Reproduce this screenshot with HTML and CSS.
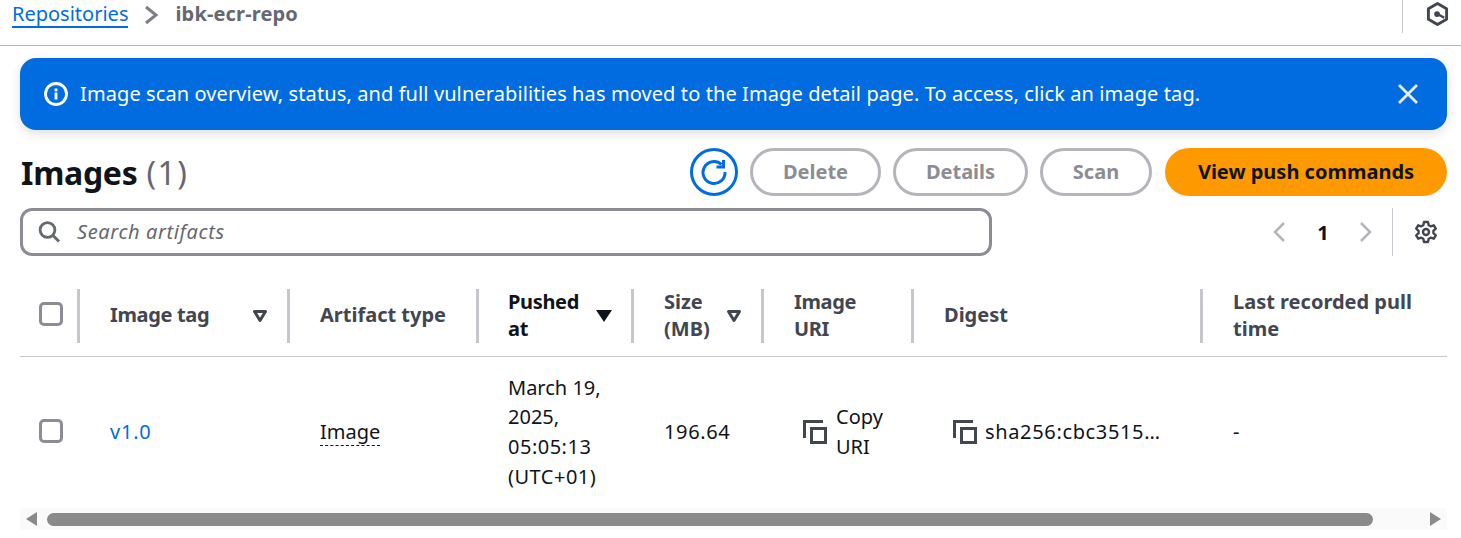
FILE: index.html
```html
<!DOCTYPE html>
<html lang="en">

<head>
    <meta charset="UTF-8">
    <title>ibk-ecr-repo</title>
    <link rel="stylesheet" href="styles.css">
</head>

<body>

    <div class="topbar">
        <div class="crumbs">
            <a class="crumb-link" href="#">Repositories</a>
            <svg class="crumb-sep" width="16" height="20" viewBox="0 0 16 20"><path d="M2 2l10 8-10 8" fill="none" stroke="#7d7d85" stroke-width="3"/></svg>
            <span class="crumb-current">ibk-ecr-repo</span>
        </div>
        <div class="top-right">
            <svg width="24" height="26" viewBox="0 0 24 26">
                <path d="M12 2l9.500 5.500v11L12 24l-9.500-5.500v-11z" fill="none" stroke="#424650" stroke-width="3" stroke-linejoin="round"/>
                <circle cx="11.500" cy="13" r="3" fill="#424650"/>
                <path d="M12 13l7 4" stroke="#424650" stroke-width="2.500"/>
            </svg>
        </div>
    </div>

    <div class="notice">
        <svg class="notice-icon" width="24" height="24" viewBox="0 0 24 24">
            <circle cx="12" cy="12" r="10.500" fill="none" stroke="#fff" stroke-width="2.800"/>
            <rect x="10.600" y="10.500" width="2.800" height="7" fill="#fff"/>
            <rect x="10.600" y="6.500" width="2.800" height="2.800" fill="#fff"/>
        </svg>
        <span class="notice-text">Image scan overview, status, and full vulnerabilities has moved to the Image detail page. To access, click an image tag.</span>
        <svg class="notice-close" width="20" height="20" viewBox="0 0 20 20"><path d="M1 1l18 18M19 1L1 19" stroke="#e9ebed" stroke-width="2.800"/></svg>
    </div>

    <div class="head-row">
        <h1>Images <span class="count">(1)</span></h1>
        <div class="actions">
            <button class="btn-icon" type="button">
                <svg width="28" height="28" viewBox="0 0 28 28">
                    <path d="M21.500 6.500A11 11 0 1 0 25 14" fill="none" stroke="#006ce0" stroke-width="3"/>
                    <path d="M23.500 2v7h-7" fill="none" stroke="#006ce0" stroke-width="3"/>
                </svg>
            </button>
            <button class="btn btn-delete" type="button">Delete</button>
            <button class="btn btn-details" type="button">Details</button>
            <button class="btn btn-scan" type="button">Scan</button>
            <button class="btn-primary" type="button">View push commands</button>
        </div>
    </div>

    <div class="filter-row">
        <div class="search">
            <svg width="24" height="22" viewBox="0 0 24 22">
                <circle cx="9.500" cy="9" r="7.400" fill="none" stroke="#656871" stroke-width="2.800"/>
                <path d="M15 14.500l6 6" stroke="#656871" stroke-width="2.800"/>
            </svg>
            <span class="search-text">Search artifacts</span>
        </div>
        <div class="pager">
            <svg width="14" height="22" viewBox="0 0 14 22"><path d="M12 2L3 11l9 9" fill="none" stroke="#b4b4bb" stroke-width="2.500"/></svg>
            <span class="page-num">1</span>
            <svg width="14" height="22" viewBox="0 0 14 22"><path d="M2 2l9 9-9 9" fill="none" stroke="#b4b4bb" stroke-width="2.500"/></svg>
        </div>
        <div class="settings">
            <svg width="24" height="24" viewBox="0 0 24 24">
                <path d="M10 2h4l.7 3.200 2 1.100 3.100-1 2 3.400-2.400 2.200v2.200l2.400 2.200-2 3.400-3.100-1-2 1.100L14 22h-4l-.7-3.200-2-1.100-3.100 1-2-3.400 2.400-2.200v-2.200L2.200 8.700l2-3.400 3.100 1 2-1.100z" fill="none" stroke="#424650" stroke-width="2.400" stroke-linejoin="round"/>
                <circle cx="12" cy="12" r="3" fill="none" stroke="#424650" stroke-width="2.400"/>
            </svg>
        </div>
    </div>

    <div class="table">
        <div class="row row-head">
            <div class="cell cell-check"><span class="checkbox"></span></div>
            <div class="cell th">
                <span class="th-text th-one th-tight">Image tag</span>
                <svg class="sort" width="16" height="14" viewBox="0 0 16 14"><path d="M2.500 2.500h11L8 11.500z" fill="none" stroke="#424650" stroke-width="3" stroke-linejoin="round"/></svg>
            </div>
            <div class="cell th"><span class="th-text th-one">Artifact type</span></div>
            <div class="cell th th-sorted">
                <span class="th-text th-tight">Pushed<br>at</span>
                <svg class="sort" width="16" height="14" viewBox="0 0 16 14"><path d="M0 1h16l-8 12z" fill="#0f141a"/></svg>
            </div>
            <div class="cell th">
                <span class="th-text">Size<br>(MB)</span>
                <svg class="sort" width="16" height="14" viewBox="0 0 16 14"><path d="M2.500 2.500h11L8 11.500z" fill="none" stroke="#424650" stroke-width="3" stroke-linejoin="round"/></svg>
            </div>
            <div class="cell th"><span class="th-text th-tight">Image<br>URI</span></div>
            <div class="cell th"><span class="th-text th-one">Digest</span></div>
            <div class="cell th th-last"><span class="th-text">Last recorded pull<br>time</span></div>
        </div>
        <div class="row row-body">
            <div class="cell cell-check"><span class="checkbox"></span></div>
            <div class="cell td"><a class="tag-link num" href="#">v1.0</a></div>
            <div class="cell td"><span class="dotted">Image</span></div>
            <div class="cell td">March 19,<br>2025,<br><span class="num">05:05:13</span><br><span class="num">(UTC+01)</span></div>
            <div class="cell td"><span class="num-wide">196.64</span></div>
            <div class="cell td td-copy td-uri">
                <svg width="24" height="24" viewBox="0 0 24 24"><path d="M1.500 18V1.500H20" fill="none" stroke="#424650" stroke-width="3"/><rect x="8.500" y="8.500" width="14" height="14" fill="none" stroke="#424650" stroke-width="3"/></svg>
                <span>Copy<br>URI</span>
            </div>
            <div class="cell td td-copy td-digest">
                <svg width="24" height="24" viewBox="0 0 24 24"><path d="M1.500 18V1.500H20" fill="none" stroke="#424650" stroke-width="3"/><rect x="8.500" y="8.500" width="14" height="14" fill="none" stroke="#424650" stroke-width="3"/></svg>
                <span class="num-wide">sha256:cbc3515…</span>
            </div>
            <div class="cell td">-</div>
        </div>
    </div>

    <div class="scrollbar">
        <svg width="12" height="14" viewBox="0 0 12 14"><path d="M11 0v14L0 7z" fill="#8a8a8a"/></svg>
        <div class="thumb"></div>
        <svg width="12" height="14" viewBox="0 0 12 14"><path d="M1 0v14l11-7z" fill="#8a8a8a"/></svg>
    </div>

</body>

</html>
```

FILE: styles.css
```css
body {
    font-family: "Noto Sans", "Open Sans", sans-serif;
    font-size: 20px;
    margin: 0;
    padding: 0;
    background-color: #fff;
    color: #0f141a;
    overflow: hidden;
}

.topbar {
    display: flex;
    justify-content: space-between;
    height: 45px;
    padding: 0 13px 0 12px;
    border-bottom: 1px solid #b4b4bb;
}

.crumbs {
    display: flex;
    align-items: flex-start;
    height: 30px;
    line-height: 27px;
}

.crumb-link {
    color: #006ce0;
    text-decoration: none;
    border-bottom: 2px solid #006ce0;
    height: 26px;
    line-height: 27px;
}

.crumb-sep {
    margin: 5px 15px 0 16px;
}

.crumb-current {
    font-weight: 700;
    color: #656871;
    letter-spacing: 0.15px;
}

.top-right {
    display: flex;
    align-items: flex-start;
    height: 33px;
    width: 47px;
    margin-right: -1px;
    padding-left: 23px;
    box-sizing: border-box;
    border-left: 1px solid #c6c6cd;
}

.top-right svg {
    margin-top: 1px;
}

.notice {
    display: flex;
    align-items: center;
    height: 72px;
    margin: 12px 14px 0 20px;
    padding: 0 29px 0 24px;
    background-color: #006ce0;
    border-radius: 16px;
    box-shadow: 0 4px 12px rgba(0, 7, 22, 0.12);
    color: #fff;
}

.notice-text {
    flex: 1;
    margin: 0 0 2px 12px;
    letter-spacing: 0.1px;
}

.head-row {
    display: flex;
    justify-content: space-between;
    align-items: center;
    height: 48px;
    margin: 18px 14px 0 20px;
}

h1 {
    margin: 0 0 0 1px;
    font-size: 32px;
    font-weight: 700;
    letter-spacing: -0.3px;
}

.count {
    margin-left: 1px;
    font-weight: 400;
    color: #656871;
    letter-spacing: 1.5px;
}

.actions {
    display: flex;
    gap: 12px;
}

.btn-icon,
.btn,
.btn-primary {
    height: 48px;
    padding: 0 0 2px;
    box-sizing: border-box;
    font-family: inherit;
    font-size: 20px;
    font-weight: 700;
    border-radius: 24px;
}

.btn-icon {
    display: flex;
    align-items: center;
    justify-content: center;
    width: 48px;
    padding: 0;
    background-color: #fff;
    border: 3px solid #006ce0;
}

.btn {
    background-color: #fff;
    color: #8c8c94;
    border: 3px solid #b4b4bb;
}

.btn-delete {
    width: 131px;
}

.btn-details {
    width: 135px;
}

.btn-scan {
    width: 112px;
}

.btn-primary {
    width: 282px;
    margin-left: 1px;
    background-color: #ff9900;
    color: #0f141a;
    border: none;
}

.filter-row {
    display: flex;
    align-items: stretch;
    height: 48px;
    margin: 12px 14px 0 20px;
}

.search {
    display: flex;
    align-items: center;
    width: 972px;
    box-sizing: border-box;
    padding-left: 15px;
    border: 3px solid #8c8c94;
    border-radius: 12px;
}

.search-text {
    margin: 0 0 2px 15px;
    font-style: italic;
    color: #656871;
    letter-spacing: 0.6px;
}

.pager {
    display: flex;
    align-items: center;
    justify-content: center;
    gap: 30px;
    margin-left: auto;
    width: 127px;
    box-sizing: border-box;
    padding-right: 12px;
}

.page-num {
    margin-left: 1px;
    font-weight: 700;
}

.settings {
    display: flex;
    align-items: center;
    justify-content: flex-end;
    width: 55px;
    box-sizing: border-box;
    padding-right: 9px;
    border-left: 1px solid #c6c6cd;
}

.table {
    margin: 33px 14px 0 20px;
}

.row {
    display: grid;
    grid-template-columns: 58px 210px 189px 155px 130px 150px 289px 246px;
}

.row-head {
    height: 68px;
    box-sizing: border-box;
    align-items: start;
    border-bottom: 1px solid #c6c6cd;
}

.row-body {
    height: 150px;
    align-items: center;
}

.cell-check {
    display: flex;
    align-items: center;
    height: 50px;
    padding-left: 19px;
}

.row-body .cell-check {
    height: auto;
    padding-bottom: 2px;
}

.checkbox {
    display: block;
    width: 24px;
    height: 24px;
    box-sizing: border-box;
    border: 3px solid #8c8c94;
    border-radius: 5px;
}

.th {
    display: flex;
    align-items: center;
    justify-content: space-between;
    height: 54px;
    box-sizing: border-box;
    padding: 0 20px 2px 30px;
    border-left: 3px solid #c6c6cd;
    margin-left: -1px;
    font-weight: 700;
    line-height: 27px;
    color: #424650;
}

.th-sorted {
    color: #0f141a;
    padding-left: 29px;
}

.th-one {
    margin-bottom: 2px;
}

.th-tight {
    letter-spacing: -0.35px;
}

.row-head .sort {
    flex: none;
    margin-top: 2px;
}

.row-head .cell:nth-child(5) {
    padding-right: 20px;
}

.td {
    padding-left: 32px;
    line-height: 29.6px;
}

.row-body .cell:nth-child(4) {
    padding-left: 31px;
}

.num {
    letter-spacing: 0.5px;
}

.num-wide {
    letter-spacing: 0.65px;
}

.tag-link {
    color: #006ce0;
    text-decoration: none;
    letter-spacing: 0.8px;
}

.dotted {
    border-bottom: 1px dashed #0f141a;
}

.td-copy {
    display: flex;
    align-items: center;
    gap: 9px;
}

.td-uri {
    padding-left: 41px;
}

.td-digest {
    padding-left: 41px;
    gap: 8px;
}

.scrollbar {
    display: flex;
    align-items: center;
    height: 22px;
    margin: 1px 14px 0 20px;
    padding: 0 6px;
    background-color: #fafafa;
}

.thumb {
    height: 13px;
    width: 1327px;
    margin: 0 56px 0 9px;
    background-color: #8a8a8a;
    border-radius: 7px;
}
```
